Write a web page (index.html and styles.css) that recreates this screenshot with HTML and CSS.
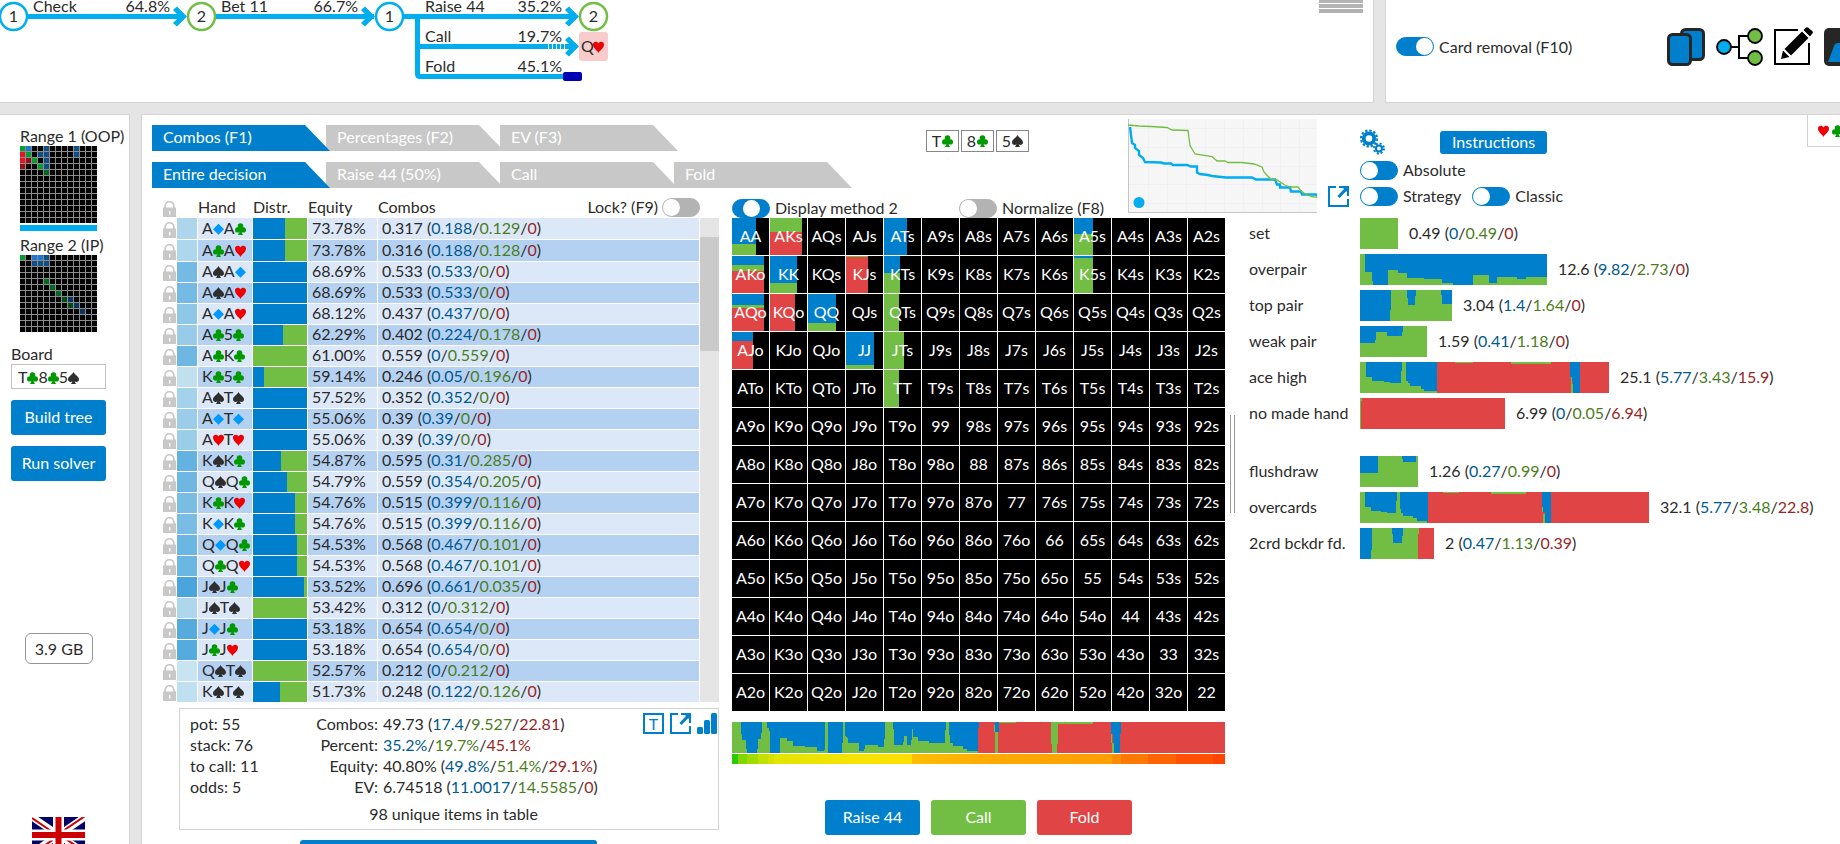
FILE: index.html
```html
<!DOCTYPE html>
<html lang="en">
<head>
<meta charset="utf-8">
<title>Range explorer</title>
<link rel="stylesheet" href="styles.css">
</head>
<body>
<svg class="defs" aria-hidden="true">
  <symbol id="lock" viewBox="0 0 13 16">
    <path d="M2.2 8V5a4.3 4.3 0 0 1 8.6 0v3" fill="none" stroke="#c8c8c8" stroke-width="1.8"/>
    <path d="M0 6.500h13V16H0z" fill="#c8c8c8"/>
    <path d="M6 10h1.400v3.400H6z" fill="#fff"/>
  </symbol>
  <symbol id="popout" viewBox="0 0 21 21">
    <path d="M8 1H1v19h19v-7M11 1h9v9" fill="none" stroke="#0080cc" stroke-width="2"/>
    <path d="M20 1L10.500 11" fill="none" stroke="#0080cc" stroke-width="3"/>
    <path d="M14 1h7v7z" fill="#0080cc"/>
  </symbol>
  <symbol id="suit-c" viewBox="0 0 11 12"><circle cx="5.500" cy="3" r="2.800"/><circle cx="2.700" cy="6.900" r="2.700"/><circle cx="8.300" cy="6.900" r="2.700"/><path d="M4.500 4h2v5l1.500 3h-5l1.500-3z"/></symbol>
  <symbol id="suit-d" viewBox="0 0 11 12"><path d="M5.500.8L11 6.300l-5.500 5.500L0 6.300z"/></symbol>
  <symbol id="suit-h" viewBox="0 0 11 12"><path d="M5.500 12C4.500 9.500 0 7.500 0 3.600 0 .3 4.300-.2 5.500 2.600 6.700-.2 11 .3 11 3.600 11 7.500 6.500 9.500 5.500 12z"/></symbol>
  <symbol id="suit-s" viewBox="0 0 11 12"><path d="M5.500 0C6.500 2.500 11 4.300 11 7.500c0 2.500-3 3-4.500 1.700L8 12H3l1.500-2.800C3 10.500 0 10 0 7.500 0 4.300 4.500 2.500 5.500 0z"/></symbol>
</svg>

<div class="top">
  <section class="panel tree-panel">
    <svg class="tree" width="610" height="102" viewBox="0 0 610 102" role="img" aria-label="Action tree">
      <g fill="none" stroke="#00adef" stroke-width="5">
        <path d="M28 16.500H183M215 16.500H374M404 16.500H576"/>
        <path d="M417.500 16.500V74q0 2.500 2.500 2.500H563M417.500 46.500H576"/>
      </g>
      <path d="M548.500 44v5M552.500 44v5M556.500 44v5M560.500 44v5M564.500 44v5" stroke="#fff"/>
      <g fill="#00adef">
        <path id="arrowhead" d="M173 10l4-3.500 10 10-10 10-4-3.500 6.500-6.500z"/>
        <use href="#arrowhead" x="188"/>
        <use href="#arrowhead" x="392"/>
        <use href="#arrowhead" x="392" y="30"/>
      </g>
      <g fill="#fff" stroke-width="2.500">
        <circle cx="13.500" cy="16.500" r="13.500" stroke="#00adef"/>
        <circle cx="201.500" cy="16.500" r="13.500" stroke="#72be44"/>
        <circle cx="389.500" cy="16.500" r="13.500" stroke="#00adef"/>
        <circle cx="593.500" cy="16.500" r="13.500" stroke="#72be44"/>
      </g>
      <rect x="579" y="32" width="29" height="29" rx="3" fill="#f9cccc"/>
      <rect x="563" y="72" width="19" height="9" rx="2" fill="#0000b3"/>
      <use href="#suit-h" class="h" x="593" y="41" width="11" height="12"/>
      <g class="tree-text">
        <text x="33" y="12">Check</text><text x="170" y="12" text-anchor="end">64.8%</text>
        <text x="221" y="12">Bet 11</text><text x="358" y="12" text-anchor="end">66.7%</text>
        <text x="425" y="12">Raise 44</text><text x="562" y="12" text-anchor="end">35.2%</text>
        <text x="425" y="42">Call</text><text x="562" y="42" text-anchor="end">19.7%</text>
        <text x="425" y="72">Fold</text><text x="562" y="72" text-anchor="end">45.1%</text>
        <text x="581" y="52">Q</text>
        <g text-anchor="middle">
          <text x="13.500" y="22">1</text><text x="201.500" y="22">2</text><text x="389.500" y="22">1</text><text x="593.500" y="22">2</text>
        </g>
      </g>
    </svg>
    <div class="grip"><i></i><i></i><i></i></div>
  </section>
  <section class="panel tools">
    <label class="toggle"><input type="checkbox" class="switch" checked><span>Card removal (F10)</span></label>
    <nav class="tool-icons">
      <button class="icon" aria-label="Cards"><svg width="38" height="38" viewBox="0 0 38 38"><g fill="#0080cc" stroke="#262626" stroke-width="3"><rect x="14.500" y="1.500" width="22" height="30" rx="4"/><rect x="1.500" y="6.500" width="22" height="30" rx="4"/></g></svg></button>
      <button class="icon" aria-label="Tree"><svg width="47" height="38" viewBox="0 0 47 38"><path d="M14 19h9M38 8H23v22h15" fill="none" stroke="#000" stroke-width="2"/><g stroke="#000" stroke-width="1.800"><circle cx="8" cy="19" r="7" fill="#00adef"/><circle cx="39" cy="8" r="7" fill="#72be44"/><circle cx="39" cy="30" r="7" fill="#72be44"/></g></svg></button>
      <button class="icon" aria-label="Edit"><svg width="39" height="39" viewBox="0 0 39 39"><path d="M24 3H1v34h34V16" fill="none" stroke="#000" stroke-width="2"/><path d="M28 4.500l6.500 6.500L17 28.500 10.500 22zM9 23.500l6.500 6.500L7 32zM29.500 3L32 .6q1-.8 2 0l4.500 3.700q.8 1 0 2L36 9.500z" fill="#000"/></svg></button>
      <button class="icon" aria-label="Chart"><svg width="38" height="38" viewBox="0 0 38 38"><rect width="38" height="38" rx="5" fill="#262626"/><path d="M4 34L10 18q1-3 4-3h10q3 0 4 3l6 16z" fill="#0080cc"/></svg></button>
    </nav>
  </section>
</div>

<div class="bottom">
  <aside class="panel side">
    <div class="range"><span>Range 1 (OOP)</span><div class="mini" id="range1"></div><div class="active-bar"></div></div>
    <div class="range"><span>Range 2 (IP)</span><div class="mini" id="range2"></div></div>
    <div class="side-controls">
      <span>Board</span>
      <button class="board-box">T<svg class="suit c" aria-label="♣"><use href="#suit-c"/></svg>8<svg class="suit c" aria-label="♣"><use href="#suit-c"/></svg>5<svg class="suit s" aria-label="♠"><use href="#suit-s"/></svg></button>
      <button class="btn raise">Build tree</button>
      <button class="btn raise">Run solver</button>
    </div>
    <div class="memory">3.9 GB</div>
    <svg class="flag" viewBox="0 0 53 36" width="53" height="36" role="img" aria-label="English">
      <rect width="53" height="36" fill="#000066"/>
      <path d="M0 0L53 36M53 0L0 36" stroke="#fff" stroke-width="7"/>
      <path d="M0 1L26.500 19M53 -1L26.500 17M26.500 17L53 35M26.500 19L0 37" stroke="#cc0000" stroke-width="2"/>
      <path d="M26.500 0V36M0 18H53" stroke="#fff" stroke-width="11"/>
      <path d="M26.500 0V36M0 18H53" stroke="#cc0000" stroke-width="6"/>
    </svg>
  </aside>

  <main class="panel main">
    <div class="left-col">
      <div class="tabs"><button class="tab on">Combos (F1)</button><button class="tab">Percentages (F2)</button><button class="tab">EV (F3)</button></div>
      <div class="tabs"><button class="tab on">Entire decision</button><button class="tab">Raise 44 (50%)</button><button class="tab">Call</button><button class="tab">Fold</button></div>
      <div class="list">
        <table class="combos">
          <colgroup><col class="w-lock"><col class="w-heat"><col class="w-hand"><col class="w-dist"><col class="w-eq"><col></colgroup>
          <thead><tr>
            <th><svg class="lock" width="13" height="16"><use href="#lock"/></svg></th><th></th>
            <th>Hand</th><th>Distr.</th><th>Equity</th>
            <th><div class="th-last">Combos<label class="toggle"><span>Lock? (F9)</span><input type="checkbox" class="switch grey"></label></div></th>
          </tr></thead>
          <tbody id="rows"></tbody>
        </table>
        <div class="scrollbar"><div class="thumb"></div></div>
      </div>
      <div class="stats">
        <div class="stats-left"><span>pot: 55</span><span>stack: 76</span><span>to call: 11</span><span>odds: 5</span></div>
        <dl class="stats-right">
          <dt>Combos:</dt><dd>49.73 (<em class="r">17.4</em>/<em class="g">9.527</em>/<em class="f">22.81</em>)</dd>
          <dt>Percent:</dt><dd><em class="r">35.2%</em>/<em class="g">19.7%</em>/<em class="f">45.1%</em></dd>
          <dt>Equity:</dt><dd>40.80% (<em class="r">49.8%</em>/<em class="g">51.4%</em>/<em class="f">29.1%</em>)</dd>
          <dt>EV:</dt><dd>6.74518 (<em class="r">11.0017</em>/<em class="g">14.5585</em>/<em class="f">0</em>)</dd>
        </dl>
        <div class="stats-icons">
          <button class="icon t-box">T</button>
          <button class="icon" aria-label="Open in window"><svg width="21" height="21"><use href="#popout"/></svg></button>
          <button class="icon" aria-label="Chart"><svg width="20" height="21" viewBox="0 0 20 21" fill="#0080cc"><rect y="14" width="6" height="7" rx="1.500"/><rect x="7" y="7" width="6" height="14" rx="1.500"/><rect x="14" width="6" height="21" rx="1.500"/></svg></button>
        </div>
        <p class="stats-foot">98 unique items in table</p>
      </div>
      <button class="btn raise wide" aria-label="Show"></button>
    </div>

    <div class="mid-col">
      <div class="cards">
        <span>T<svg class="suit c" aria-label="♣"><use href="#suit-c"/></svg></span>
        <span>8<svg class="suit c" aria-label="♣"><use href="#suit-c"/></svg></span>
        <span>5<svg class="suit s" aria-label="♠"><use href="#suit-s"/></svg></span>
      </div>
      <div class="toggles">
        <label class="toggle"><input type="checkbox" class="switch mid" checked><span>Display method 2</span></label>
        <label class="toggle"><input type="checkbox" class="switch grey"><span>Normalize (F8)</span></label>
      </div>
      <div class="matrix" id="matrix"></div>
      <svg class="strip" viewBox="36 66 1479 93" preserveAspectRatio="none" role="img" aria-label="Strategy by equity" shape-rendering="crispEdges">
        <path fill="#0080cc" d="M36 66H777V159H36z"/>
        <path fill="#e04444" d="M774 159V84H777V66H1515V159z"/>
        <path fill="#72be44" d="M36 159V66H63V102H66V120H78V147H81V159H111V147H114V117H123V99H126V66H141V84H147V93H150V159H180V114H201V123H219V138H255V141H291V153H312V150H315V66H324V159H366V129H369V66H375V108H378V111H381V114H384V129H417V153H432V147H435V135H474V141H492V117H495V66H519V87H522V135H549V126H552V108H561V135H573V120H576V87H579V111H594V123H627V129H675V90H678V66H687V105H690V129H699V138H729V147H741V153H774V159zM822 75h15v21h-3v63h-9V96h-3zM837 66h51v3h-51zM993 66h126v6h-105v60h-2v27h-15v-27h-4z"/>
        <path fill="#0080cc" d="M825 66h12v30h-12zM1173 66h30v36h-3v57h-18v-27h-4v-30h-5z"/>
        <path fill="#72be44" d="M1173 102h3v27h5v30h-5v-30h-3z"/>
      </svg>
      <div class="heat"></div>
      <div class="actions"><button class="btn raise">Raise 44</button><button class="btn call">Call</button><button class="btn fold">Fold</button></div>
    </div>

    <div class="splitter"></div>

    <div class="right-col">
      <div class="right-head">
        <svg class="chart" width="189" height="94" viewBox="0 0 189 94" role="img" aria-label="Equity graph">
          <path fill="#f6f6f6" d="M0 0h190v94H0z"/>
          <path stroke="#f1f1f5" fill="none" d="M20.500 0v93M39.500 0v93M58.500 0v93M77.500 0v93M96.500 0v93M115.500 0v93M134.500 0v93M152.500 0v93M171.500 0v93M0 9.500h190M0 28.500h190M0 47.500h190M0 65.500h190M0 84.500h190"/>
          <path stroke="#c6c6c6" fill="none" d="M.5 0v93.500H190"/>
          <path stroke="#00adef" stroke-width="2.400" fill="none" d="M2 8l1 8 1 8 3 2v3l4 3v4l4 3 2 4 16 .5 3 1h7l2 1.500h14l4 1.500h6v6l3 1.500 8 1 4 1 14 1.500h26l4 2h19l2 5h3v3h10l1 4h10l1 3h14l2 2h4"/>
          <path stroke="#72be44" stroke-width="1.300" fill="none" d="M0 6l11 1 12 .5 16 1 5 2.500 16 .5 2 15 2 3.500 3 5 17 2.500 5 4.500h8l3 1.500h14l12 1.500 8 3 2 5 7 7.500 6 .5 8 5 5 2h8l3 4 5 3.500 6 2 6 1"/>
          <circle cx="11" cy="83.500" r="5.500" fill="#00adef"/>
        </svg>
        <button class="icon pop" aria-label="Open graph"><svg width="21" height="21"><use href="#popout"/></svg></button>
        <div class="options">
          <div class="opt-row">
            <button class="icon" aria-label="Settings"><svg width="25" height="26" viewBox="0 0 25 26"><g fill="none" stroke="#0080cc"><circle cx="9" cy="9.500" r="5.200" stroke-width="3.800"/><circle cx="9" cy="9.500" r="8" stroke-width="2.200" stroke-dasharray="2.400 1.790"/><circle cx="19" cy="19.500" r="3" stroke-width="2.200"/><circle cx="19" cy="19.500" r="5" stroke-width="2" stroke-dasharray="2 1.930"/></g></svg></button>
            <button class="btn raise instructions">Instructions</button>
          </div>
          <div class="opt-row"><label class="toggle"><input type="checkbox" class="switch"><span>Absolute</span></label></div>
          <div class="opt-row"><label class="toggle"><input type="checkbox" class="switch"><span>Strategy</span></label><label class="toggle"><input type="checkbox" class="switch"><span>Classic</span></label></div>
        </div>
        <div class="suits-box"><svg class="suit h" aria-label="♥"><use href="#suit-h"/></svg><svg class="suit c" aria-label="♣"><use href="#suit-c"/></svg></div>
      </div>
      <div class="cats" id="cats"></div>
    </div>
  </main>
</div>
<script src="app.js"></script>
</body>
</html>
```
FILE: styles.css
```css
* { box-sizing: border-box; }
body {
  margin: 0;
  height: 100vh;
  overflow: hidden;
  display: flex;
  flex-direction: column;
  gap: 11px;
  background: #e5e5e5;
  color: #2b2b2b;
  font: 16px/20px Lato, "Liberation Sans", sans-serif;
}
button, input { font: inherit; color: inherit; margin: 0; padding: 0; }
button { border: 0; background: none; cursor: pointer; white-space: nowrap; }
em { font-style: normal; }
.defs { position: absolute; width: 0; height: 0; }
.panel { background: #fff; border: 1px solid #d4d4d4; overflow: hidden; }

.suit { width: 11px; height: 12px; vertical-align: -1px; }
.c { fill: #009900; }
.s { fill: #2e2e2e; }
.h { fill: #ee0000; }
.d { fill: #0099ff; }
.r { color: #005a8f; }
.g { color: #4b7d1e; }
.f { color: #992626; }

.toggle { display: flex; align-items: center; gap: 5px; white-space: nowrap; }
.switch {
  appearance: none;
  width: 38px;
  height: 19px;
  border: 1px solid #0080cc;
  border-radius: 10px;
  background: #0080cc;
  display: flex;
  justify-content: flex-start;
  flex: none;
}
.switch::before { content: ""; width: 17px; height: 17px; border-radius: 50%; background: #fff; }
.switch:checked { justify-content: flex-end; }
.switch.mid { justify-content: center; }
.switch.grey { background: #b3b3b3; border-color: #b3b3b3; }

.btn {
  height: 35px;
  padding-bottom: 1px;
  border-radius: 3px;
  color: #fff;
}
.raise { background: #0080cc; color: #fff; }
.call { background: #72be44; }
.fold { background: #e04444; }
.icon { display: block; line-height: 0; }
.icon svg { display: block; }

.top { display: grid; grid-template-columns: minmax(0, 1fr) 455px; gap: 11px; flex: none; }
.top .panel { border-top: 0; }
.tree-panel { display: flex; justify-content: space-between; border-left: 0; padding-right: 10px; }
.tree { display: block; flex: none; }
.tree-text { font-size: 16px; fill: #2b2b2b; }
.grip { display: grid; gap: 1px; align-content: start; }
.grip i { display: block; width: 44px; height: 4px; background: #b3b3b3; }
.grip i:first-child { height: 3px; }
.tools { display: flex; align-items: center; gap: 95px; padding: 0 0 9px 10px; border-right: 0; }
.tool-icons { display: flex; gap: 11px; align-items: center; flex: none; }

.bottom { display: grid; grid-template-columns: 130px minmax(0, 1fr); gap: 11px; flex: 1; min-height: 0; }
.bottom .panel { border-bottom: 0; }
.side { border-left: 0; padding-top: 11px; display: flex; flex-direction: column; }
.side > * { flex: none; }
.range { padding-left: 20px; margin-bottom: 2px; white-space: nowrap; }
.range span { display: block; }
.mini {
  display: grid;
  grid-template-columns: repeat(13, 5px);
  grid-auto-rows: 5px;
  gap: 1px;
  width: 77px;
  background: #8c8c8c;
}
.mini i { background: #000; }
.mini .g1 { background: #00a030; }
.mini .g2 { background: #006b20; }
.mini .g3 { background: #004d18; }
.mini .b1 { background: #1b78cc; }
.mini .b2 { background: #0f4f85; }
.mini .b3 { background: #0a3460; }
.mini .r1 { background: #ee1122; }
.mini .r2 { background: #941014; }
.active-bar { width: 77px; height: 6px; margin: 2px 0; background: #00adef; }
.side-controls { display: flex; flex-direction: column; padding: 10px 23px 0 11px; }
.side-controls .btn { margin-top: 11px; }
.board-box { border: 1px solid #c0c0c0; height: 25px; text-align: left; padding-left: 6px; }
.memory {
  align-self: flex-start;
  margin: 152px 0 153px 25px;
  width: 68px;
  height: 31px;
  border: 1px solid #949494;
  border-radius: 6px;
  display: flex;
  align-items: center;
  justify-content: center;
}
.flag { margin-left: 32px; }

.main { display: flex; align-items: flex-start; border-right: 0; padding-left: 10px; }
.left-col { flex: none; width: 567px; padding-top: 10px; margin-right: 13px; }
.tabs { display: flex; width: 720px; margin-bottom: 11px; }
.tab {
  width: 178px;
  height: 26px;
  margin-right: -4px;
  padding: 0 0 2px 11px;
  text-align: left;
  color: #fff;
  background: #c8c8c8;
  clip-path: polygon(0 0, 153px 0, 100% 100%, 0 100%);
}
.tab.on { background: #0080cc; position: relative; z-index: 1; }
.list { display: flex; padding-left: 10px; margin-top: -1px; }
.combos { flex: 1; table-layout: fixed; border-collapse: separate; border-spacing: 0; width: 100%; }
.w-lock { width: 15px; }
.w-heat { width: 21px; }
.w-hand, .w-dist { width: 55px; }
.w-eq { width: 70px; }
.combos th, .combos td { padding: 0 0 2px; line-height: 18px; font-weight: normal; text-align: left; white-space: nowrap; }
.combos th { height: 20px; }
.th-last { display: flex; justify-content: space-between; height: 18px; }
.th-last .toggle { gap: 4px; }
.combos td { height: 21px; border-bottom: 1px solid #fff; border-right: 1px solid #fff; }
.combos tr:nth-child(-n+2) td { height: 22px; }
.combos td:nth-child(n+3) { padding-left: 4px; background: #dce8f8; }
.combos tr:nth-child(even) td:nth-child(n+3) { background: #b5d1f2; }
.combos tbody td.dist { padding: 0; }
.dist div { display: flex; height: 20px; background: #72be44; }
.combos tr:nth-child(-n+2) .dist div { height: 21px; }
.dist i { background: #0080cc; }
.lock { display: block; margin: 2px 0 0 1px; }
.combos td:first-child, .combos th:first-child { padding: 0; border-right: 0; }
.scrollbar { width: 19px; height: 484px; margin-top: 20px; padding-top: 19px; background: #e5e5e5; }
.thumb { height: 114px; background: #cacaca; }

.stats {
  margin: 5px 0 10px 27px;
  height: 122px;
  border: 1px solid #d2d2d2;
  display: grid;
  grid-template-columns: 98px 1fr auto;
  align-content: space-between;
  line-height: 21px;
  padding: 4px 1px 5px 10px;
}
.stats-left { display: grid; align-content: start; white-space: nowrap; }
.stats-right { display: grid; grid-template-columns: 90px auto; column-gap: 5px; margin: 0; align-content: start; justify-content: start; white-space: nowrap; }
.stats-right dt { text-align: right; }
.stats-right dd { margin: 0; }
.stats-icons { display: flex; gap: 6px; align-items: flex-start; }
.t-box { width: 21px; height: 21px; border: 2px solid #0080cc; color: #0080cc; line-height: 17px; }
.stats-foot { grid-column: 1 / -1; margin: 0; text-align: center; }
.wide { display: block; width: 297px; margin-left: 148px; }

.mid-col { flex: none; width: 493px; padding-top: 15px; }
.cards { display: flex; gap: 2px; margin-left: 194px; }
.cards span { width: 33px; height: 22px; border: 1px solid #888; display: flex; align-items: center; justify-content: center; gap: 1px; padding-bottom: 1px; }
.toggles { display: grid; grid-template-columns: 227px 1fr; height: 20px; margin-top: 46px; }
.toggles .toggle { padding-bottom: 1px; }
.matrix { display: grid; grid-template-columns: repeat(13, 1fr); grid-auto-rows: 37px; gap: 1px; }
.cell { background: #000; color: #fff; display: grid; align-items: center; justify-items: center; }
.cell span, .cell .fill { grid-area: 1 / 1; }
.cell span { padding-bottom: 2px; }
.cell .fill { justify-self: start; align-self: stretch; display: flex; flex-direction: column; }
.fill .r { background: #0080cc; }
.fill .g { background: #72be44; }
.fill .f { background: #e04444; }
.strip { display: block; width: 100%; height: 31px; margin-top: 11px; }
.heat {
  height: 10px;
  margin-top: 1px;
  background: linear-gradient(90deg, #2ec800 1.2%, #7fd600 1.2% 3%, #9edc00 3% 5.3%, #c2e000 5.3% 7.3%, #d5e200 7.3% 8.5%, #e2e400 8.5%, #f5e400 25%, #ffdf00 36.6%, #ffbe00 36.6%, #ffab00 52%, #ff9f00 77%, #ff8c00 77% 78.9%, #ff7800 78.9% 84.4%, #ff6400 84.4% 90%, #ff5000 90% 97.6%, #ff4400 97.6%);
}
.actions { display: flex; justify-content: center; gap: 11px; margin-top: 36px; }
.actions .btn { width: 95px; }

.splitter { flex: none; width: 5px; height: 98px; margin: 300px 0 0 5px; border: solid #999; border-width: 0 1px; }

.right-col { flex: 1; min-width: 0; }
.right-head { display: flex; height: 98px; margin-left: -107px; padding-top: 4px; }
.chart { flex: none; }
.pop { align-self: flex-start; margin: 67px 11px 0 11px; }
.options { flex: none; padding-top: 11px; }
.opt-row { display: flex; gap: 11px; height: 26px; align-items: center; }
.opt-row:first-child { height: 25px; margin-bottom: 2px; padding-bottom: 1px; }
.instructions { height: 23px; width: 107px; margin-left: 44px; }
.suits-box {
  flex: none;
  width: 60px;
  height: 32px;
  margin: -4px -27px 0 auto;
  padding: 10px;
  border: solid #d2d2d2;
  border-width: 0 0 1px 1px;
  display: flex;
  gap: 3px;
}
.cats { display: grid; gap: 5px; margin: 5px 0 0 14px; }
.cat { display: grid; grid-template-columns: 111px auto 1fr; align-items: center; height: 31px; white-space: nowrap; }
.cat span { padding-bottom: 2px; }
.cat svg { display: block; height: 31px; margin-right: 11px; }
.cat.split { margin-top: 22px; }
```
FILE: app.js
```js
const RANKS = 'AKQJT98765432';
const SUITS = { c: '♣', d: '♦', h: '♥', s: '♠' };
const COLORS = { r: '#0080cc', g: '#72be44', f: '#e04444' };
const byId = id => document.getElementById(id);

const amounts = (total, r, g, f) =>
  `${total} (<em class="r">${r}</em>/<em class="g">${g}</em>/<em class="f">${f}</em>)`;

// Small range previews: "row,column" -> colour class
const range1 = {
  '0,0': 'g1', '0,1': 'b1', '0,4': 'b2', '0,9': 'b2',
  '1,0': 'r1', '1,1': 'g1', '1,3': 'b2', '1,4': 'b2', '1,9': 'b2',
  '2,0': 'r1', '2,1': 'r2', '2,2': 'g1', '2,4': 'b2',
  '3,0': 'r2', '3,3': 'g1', '3,4': 'b2', '4,4': 'g2'
};
const range2 = {
  '0,0': 'g1', '0,2': 'b1', '0,3': 'b1', '0,4': 'b2',
  '1,2': 'b2', '1,3': 'b2', '1,4': 'b2',
  '4,4': 'g2', '5,5': 'g2', '6,6': 'g2', '7,7': 'g3', '7,8': 'b3',
  '8,8': 'g3', '8,9': 'b3', '9,10': 'b3'
};
function drawMini(el, colors) {
  let html = '';
  for (let y = 0; y < 13; y++)
    for (let x = 0; x < 13; x++) html += `<i class="${colors[y + ',' + x] || ''}"></i>`;
  el.innerHTML = html;
}
drawMini(byId('range1'), range1);
drawMini(byId('range2'), range2);

// Combos table: hand, equity, total, raise, call
const combos = [
  ['AdAc', '73.78', '0.317', '0.188', '0.129'], ['AcAh', '73.78', '0.316', '0.188', '0.128'],
  ['AsAd', '68.69', '0.533', '0.533', '0'], ['AsAh', '68.69', '0.533', '0.533', '0'],
  ['AdAh', '68.12', '0.437', '0.437', '0'], ['Ac5c', '62.29', '0.402', '0.224', '0.178'],
  ['AcKc', '61.00', '0.559', '0', '0.559'], ['Kc5c', '59.14', '0.246', '0.05', '0.196'],
  ['AsTs', '57.52', '0.352', '0.352', '0'], ['AdTd', '55.06', '0.39', '0.39', '0'],
  ['AhTh', '55.06', '0.39', '0.39', '0'], ['KsKc', '54.87', '0.595', '0.31', '0.285'],
  ['QsQc', '54.79', '0.559', '0.354', '0.205'], ['KcKh', '54.76', '0.515', '0.399', '0.116'],
  ['KdKc', '54.76', '0.515', '0.399', '0.116'], ['QdQc', '54.53', '0.568', '0.467', '0.101'],
  ['QcQh', '54.53', '0.568', '0.467', '0.101'], ['JsJc', '53.52', '0.696', '0.661', '0.035'],
  ['JsTs', '53.42', '0.312', '0', '0.312'], ['JdJc', '53.18', '0.654', '0.654', '0'],
  ['JcJh', '53.18', '0.654', '0.654', '0'], ['QsTs', '52.57', '0.212', '0', '0.212'],
  ['KsTs', '51.73', '0.248', '0.122', '0.126']
];
const card = (rank, suit) =>
  `${rank}<svg class="suit ${suit}" aria-label="${SUITS[suit]}"><use href="#suit-${suit}"/></svg>`;
byId('rows').innerHTML = combos.map(([hand, equity, total, r, g]) => {
  const w = +total;
  const heat = `rgb(${Math.round(256 - 262 * w)},${Math.round(256 - 131 * w)},${Math.round(251 - 44 * w)})`;
  return `<tr>
    <td><svg class="lock" width="13" height="16"><use href="#lock"/></svg></td>
    <td style="background:${heat}"></td>
    <td>${card(hand[0], hand[1])}${card(hand[2], hand[3])}</td>
    <td class="dist"><div><i style="width:${r / w * 100}%"></i></div></td>
    <td>${equity}%</td>
    <td>${amounts(total, r, g, '0')}</td></tr>`;
}).join('');

// Matrix fills: width of 37, then raise, call and fold shares of the height
const fills = {
  AA: [24, 26, 11, 0], AKs: [32, 0, 14, 23], ATs: [23, 37, 0, 0], A5s: [19, 16, 21, 0],
  AKo: [32, 9, 6, 22], KK: [27, 27, 10, 0], KJs: [22, 0, 1, 36], KTs: [16, 17, 20, 0], K5s: [19, 2, 35, 0],
  AQo: [32, 11, 3, 23], KQo: [25, 0, 0, 37], QQ: [28, 29, 8, 0], QTs: [15, 0, 37, 0],
  AJo: [21, 9, 0, 28], JJ: [28, 33, 4, 0], JTs: [20, 0, 37, 0], TT: [15, 0, 37, 0]
};
let cells = '';
for (let y = 0; y < 13; y++) {
  for (let x = 0; x < 13; x++) {
    const name = x === y ? RANKS[x] + RANKS[x] : x > y ? RANKS[y] + RANKS[x] + 's' : RANKS[x] + RANKS[y] + 'o';
    const fill = fills[name];
    const bar = fill ? `<div class="fill" style="width:${fill[0] / 37 * 100}%">` +
      ['r', 'g', 'f'].map((k, i) => `<i class="${k}" style="flex:${fill[i + 1]} 0 0"></i>`).join('') + '</div>' : '';
    cells += `<div class="cell">${bar}<span>${name}</span></div>`;
  }
}
byId('matrix').innerHTML = cells;

// Category bars: label, pixel width, view width, base colour, shapes, amounts
const cats = [
  ['set', 38, 96, 'g', [], ['0.49', '0', '0.49', '0']],
  ['overpair', 187, 473, 'r', [['g', 'M0 93V0H13V54H30V81H33V93H72V48H96V57H119V72H162V75H207V87H235V93H286V63H326V87H347V69H396V75H420V69H473V93z']], ['12.6', '9.82', '2.73', '0']],
  ['top pair', 92, 233, 'g', [['r', 'M0 0H78V60H76V93H0zM119 0H142V18H139V45H122V24H119zM205 0H233V42H207V15H205z']], ['3.04', '1.4', '1.64', '0']],
  ['weak pair', 67, 170, 'g', [['r', 'M0 0H109V18H106V30H68V18H41V42H38V51H0z']], ['1.59', '0.41', '1.18', '0']],
  ['ace high', 249, 630, 'f', [['r', 'M0 0H195V93H0zM531 0H556V93H539V60H534V45H531z'], ['g', 'M0 93V0H14V45H30V57H61V60H76V63H104V27H106V0H116V57H122V63H127V72H154V81H162V87H195V93zM240 0H286V3H240zM382 0H483V5H382zM533 45H536V66H540V93H534z']], ['25.1', '5.77', '3.43', '15.9']],
  ['no made hand', 145, 367, 'f', [['g', 'M0 0H5V9H3V93H0z']], ['6.99', '0', '0.05', '6.94']],
  ['flushdraw', 58, 147, 'g', [['r', 'M0 0H46V51H0zM106 0H141V18H109V9H106z']], ['1.26', '0.27', '0.99', '0']],
  ['overcards', 289, 731, 'f', [['r', 'M0 0H171V93H0zM460 0H483V93H468V60H463V45H460z'], ['g', 'M0 93V0H13V45H28V57H53V60H68V63H91V27H94V0H101V51H104V63H110V72H134V78H144V87H170V93zM210 0H250V3H210zM332 0H420V5H332zM461 45H464V66H468V93H463z']], ['32.1', '5.77', '3.48', '22.8']],
  ['2crd bckdr fd.', 74, 187, 'g', [['r', 'M0 0H30V65H28V93H0zM80 0H109V25H106V45H84V18H80z'], ['f', 'M149 0H187V93H147V18H149z']], ['2', '0.47', '1.13', '0.39']]
];
byId('cats').innerHTML = cats.map(([label, width, view, base, shapes, values]) => {
  const paths = shapes.map(([c, d]) => `<path fill="${COLORS[c]}" d="${d}"/>`).join('');
  return `<div class="cat${label === 'flushdraw' ? ' split' : ''}"><span>${label}</span>
    <svg width="${width}" viewBox="0 0 ${view} 93" preserveAspectRatio="none" shape-rendering="crispEdges"><rect width="${view}" height="93" fill="${COLORS[base]}"/>${paths}</svg>
    <span>${amounts(...values)}</span></div>`;
}).join('');
```
